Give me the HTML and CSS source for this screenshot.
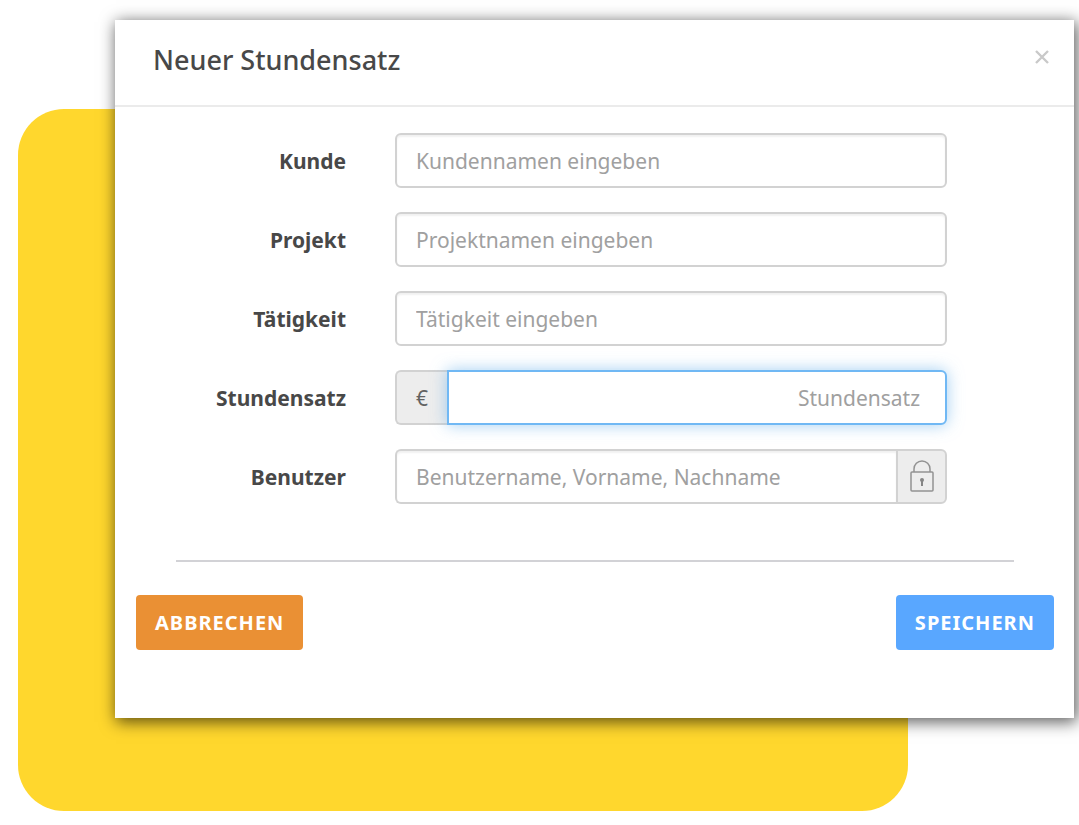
FILE: index.html
```html
<!DOCTYPE html>
<html lang="de">
<head>
  <meta charset="UTF-8">
  <title>Neuer Stundensatz</title>
  <link rel="stylesheet" href="styles.css">
</head>
<body>

  <div class="stage">
    <div class="backdrop"></div>

    <form class="modal">
      <div class="modal-header">
        <h2>Neuer Stundensatz</h2>
        <button type="button" class="close" aria-label="Schließen">
          <svg width="16" height="14" viewBox="0 0 16 14"><path d="M2 1L14 13M14 1L2 13" fill="none" stroke="#c9c9c9" stroke-width="2.4"/></svg>
        </button>
      </div>

      <div class="modal-body">
        <div class="form-row">
          <label for="kunde">Kunde</label>
          <div class="field"><input type="text" id="kunde" placeholder="Kundennamen eingeben"></div>
        </div>
        <div class="form-row">
          <label for="projekt">Projekt</label>
          <div class="field"><input type="text" id="projekt" placeholder="Projektnamen eingeben"></div>
        </div>
        <div class="form-row">
          <label for="taetigkeit">Tätigkeit</label>
          <div class="field"><input type="text" id="taetigkeit" placeholder="Tätigkeit eingeben"></div>
        </div>
        <div class="form-row">
          <label for="stundensatz">Stundensatz</label>
          <div class="field">
            <span class="addon addon-left">€</span>
            <input type="text" id="stundensatz" class="amount active" placeholder="Stundensatz">
          </div>
        </div>
        <div class="form-row">
          <label for="benutzer">Benutzer</label>
          <div class="field">
            <input type="text" id="benutzer" class="with-lock" placeholder="Benutzername, Vorname, Nachname">
            <button type="button" class="addon addon-right" aria-label="Sperren">
              <svg width="24" height="32" viewBox="0 0 24 32" fill="none" stroke="#929292">
                <rect x="1" y="12" width="22" height="19" rx="1" stroke-width="1.5"/>
                <path d="M4 12V9a8 8 0 0 1 16 0v3" stroke-width="1.5"/>
                <circle cx="12" cy="20" r="2" fill="#858585" stroke="none"/>
                <path d="M12 20v6" stroke="#858585" stroke-width="2"/>
              </svg>
            </button>
          </div>
        </div>
      </div>

      <hr>

      <div class="modal-footer">
        <button type="button" class="btn btn-cancel">Abbrechen</button>
        <button type="button" class="btn btn-save">Speichern</button>
      </div>
    </form>
  </div>

</body>
</html>
```
FILE: styles.css
```css
* {
  box-sizing: border-box;
}
body {
  margin: 0;
  background: #fff;
  color: #484848;
  font-family: "Noto Sans", "Open Sans", sans-serif;
  font-size: 21px;
}
.stage {
  display: grid;
  overflow: hidden;
}
.backdrop, .modal {
  grid-area: 1 / 1;
}
.backdrop {
  margin: 109px 171px 14px 18px;
  background: #ffd72d;
  border-radius: 46px;
}
.modal {
  margin: 20px 5px 107px 115px;
  padding-bottom: 68px;
  background: #fff;
  box-shadow: 2px 3px 15px 1px rgba(0, 0, 0, .64);
}
.modal-header {
  display: flex;
  align-items: center;
  justify-content: space-between;
  height: 87px;
  padding: 0 22px 6px 38px;
  border-bottom: 2px solid #ebebeb;
}
.modal-header h2 {
  margin: 0;
  font-size: 27px;
  font-weight: 500;
}
.close {
  display: flex;
  padding: 2px 2px 8px;
  border: 0;
  background: none;
}
.modal-body {
  display: grid;
  gap: 24px;
  padding: 26px 127px 0 0;
}
.form-row {
  display: grid;
  grid-template-columns: 231px 1fr;
  column-gap: 49px;
  align-items: center;
}
.form-row label {
  font-weight: 700;
  text-align: right;
}
.field {
  display: flex;
  height: 55px;
}
.field input {
  flex: 1;
  min-width: 0;
  padding: 0 19px;
  border: 2px solid #d2d2d2;
  border-radius: 6px;
  background: #fff;
  box-shadow: inset 0 2px 2px rgba(0, 0, 0, .06);
  color: #484848;
  font: inherit;
  outline: 0;
}
.field input::placeholder {
  color: #a0a0a0;
  opacity: 1;
}
.field .amount {
  padding-right: 25px;
  border-radius: 0 6px 6px 0;
  text-align: right;
}
.field .with-lock {
  border-right: 0;
  border-radius: 6px 0 0 6px;
}
.field .active {
  border-color: #70b8f4;
  box-shadow: 0 0 16px rgba(102, 175, 233, .6);
}
.addon {
  display: flex;
  align-items: center;
  justify-content: center;
  padding: 0;
  border: 2px solid #d2d2d2;
  background: #ededed;
  color: #636363;
}
.addon-left {
  width: 52px;
  border-right: 0;
  border-radius: 6px 0 0 6px;
}
.addon-right {
  width: 51px;
  padding-bottom: 2px;
  border-radius: 0 6px 6px 0;
}
hr {
  margin: 56px 60px 0 61px;
  border: 0;
  border-top: 2px solid #d2d2d6;
}
.modal-footer {
  display: flex;
  justify-content: space-between;
  padding: 33px 20px 0 21px;
}
.btn {
  height: 55px;
  padding: 0 19px;
  border: 0;
  border-radius: 4px;
  color: #fff;
  font: inherit;
  font-size: 20px;
  font-weight: 700;
  letter-spacing: 1px;
  text-transform: uppercase;
}
.btn-cancel {
  background: #ea9034;
}
.btn-save {
  background: #59a7ff;
}
```
